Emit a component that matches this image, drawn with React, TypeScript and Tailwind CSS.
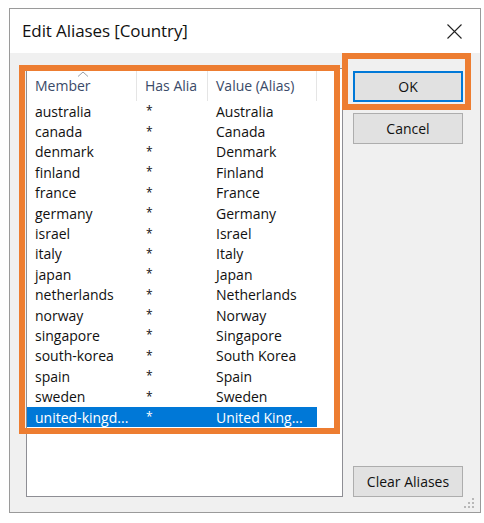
import { useState } from 'react';

const rows: [string, string][] = [
  ['australia', 'Australia'],
  ['canada', 'Canada'],
  ['denmark', 'Denmark'],
  ['finland', 'Finland'],
  ['france', 'France'],
  ['germany', 'Germany'],
  ['israel', 'Israel'],
  ['italy', 'Italy'],
  ['japan', 'Japan'],
  ['netherlands', 'Netherlands'],
  ['norway', 'Norway'],
  ['singapore', 'Singapore'],
  ['south-korea', 'South Korea'],
  ['spain', 'Spain'],
  ['sweden', 'Sweden'],
  ['united-kingd...', 'United King...'],
];

function Btn({ label, primary }: { label: string; primary?: boolean }) {
  return (
    <button
      className={`w-[110px] h-[31px] bg-[#e1e1e1] text-[14px] text-[#111] ${
        primary ? 'border-2 border-[#0078d7]' : 'border border-[#adadad]'
      }`}
    >
      {label}
    </button>
  );
}

export default function App() {
  const [selected, setSelected] = useState(15);

  return (
    <div className="w-[484px] h-[523px] bg-white pt-[8px] pl-[9px] font-['Open_Sans','Liberation_Sans',sans-serif]">
      <div className="w-[472px] h-[505px] border border-[#9a9a9a] flex flex-col bg-[#f0f0f0]">
        {/* Title bar */}
        <div className="h-[44px] bg-white flex items-center justify-between pl-[12px] pr-[18px] shrink-0">
          <span className="text-[17px] text-[#111] tracking-[-0.1px]">Edit Aliases [Country]</span>
          <svg width="15" height="15" viewBox="0 0 15 15" className="mt-[1px]">
            <path d="M0.5 0.5 L14.5 14.5 M14.5 0.5 L0.5 14.5" stroke="#222" strokeWidth="1.1" fill="none" />
          </svg>
        </div>

        {/* Body */}
        <div className="flex-1 flex pt-[15px] pl-[16px] pr-[17px] pb-[15px] gap-[10px]">
          {/* List */}
          <div className="relative w-[317px] h-full border border-[#8e8e94] bg-white">
            <div className="flex h-[32px] text-[14px] text-[#3a4a68]">
              <div className="relative w-[110px] pl-[8px] flex items-center border-r border-[#e5e5e5]">
                <svg width="12" height="6" viewBox="0 0 12 6" className="absolute left-[50px] top-[2px]">
                  <path d="M1 5.5 L6 1 L11 5.5" stroke="#9aa0a8" strokeWidth="1" fill="none" />
                </svg>
                Member
              </div>
              <div className="w-[71px] pl-[8px] flex items-center border-r border-[#e5e5e5] overflow-hidden whitespace-nowrap">
                Has Alia
              </div>
              <div className="w-[109px] pl-[8px] flex items-center border-r border-[#e5e5e5]">Value (Alias)</div>
            </div>
            <div className="text-[14px]">
              {rows.map(([m, v], i) => (
                <div
                  key={m}
                  onClick={() => setSelected(i)}
                  className={`flex h-[20.4px] items-center w-[290px] ${
                    selected === i ? 'bg-[#0078d7] text-white' : 'text-[#111]'
                  }`}
                >
                  <span className="w-[110px] pl-[8px] whitespace-nowrap">{m}</span>
                  <span className="w-[71px] pl-[9px] text-[12px]">*</span>
                  <span className="pl-[8px] whitespace-nowrap">{v}</span>
                </div>
              ))}
            </div>
            {/* highlight */}
            <div className="absolute left-[-8px] top-[-4px] w-[321px] h-[369px] border-[6px] border-[#ed7d31] pointer-events-none" />
          </div>

          {/* Buttons */}
          <div className="relative w-[110px] flex flex-col pt-[3px]">
            <Btn label="OK" primary />
            <div className="h-[11px]" />
            <Btn label="Cancel" />
            <div className="flex-1" />
            <Btn label="Clear Aliases" />
            <div className="absolute left-[-11px] top-[-15px] w-[129px] h-[57px] border-[6px] border-[#ed7d31] pointer-events-none" />
            <svg width="12" height="12" viewBox="0 0 12 12" className="absolute right-[-12px] bottom-[-12px]">
              {[
                [9, 1],
                [5, 5],
                [9, 5],
                [1, 9],
                [5, 9],
                [9, 9],
              ].map(([x, y]) => (
                <rect key={`${x}-${y}`} x={x} y={y} width="2" height="2" fill="#b8b8b8" />
              ))}
            </svg>
          </div>
        </div>
      </div>
    </div>
  );
}
